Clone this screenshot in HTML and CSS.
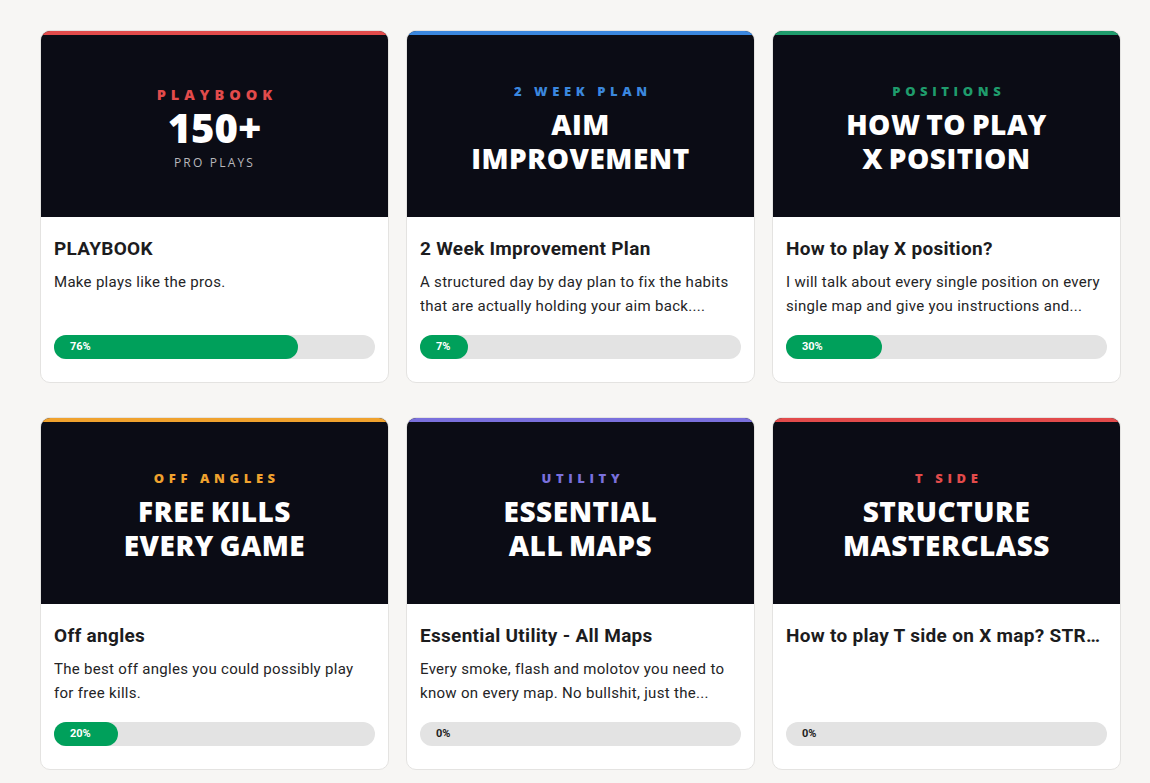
FILE: index.html
```html
<!DOCTYPE html>
<html lang="en">
<head>
  <meta charset="UTF-8" />
  <meta name="viewport" content="width=device-width, initial-scale=1.0"/>
  <title>Courses</title>
  <link rel="stylesheet" href="styles.css">
</head>
<body>

<div class="grid">

  <div class="card red">
    <div class="cover">
      <div class="tag large">Playbook</div>
      <div class="big">150+</div>
      <div class="sub">Pro plays</div>
    </div>
    <div class="body">
      <h3>PLAYBOOK</h3>
      <p>Make plays like the pros.</p>
      <div class="bar"><span class="fill" style="width: 76%">76%</span></div>
    </div>
  </div>

  <div class="card blue">
    <div class="cover">
      <div class="tag">2 Week Plan</div>
      <div class="head">Aim<br>Improvement</div>
    </div>
    <div class="body">
      <h3>2 Week Improvement Plan</h3>
      <p>A structured day by day plan to fix the habits that are actually holding your aim back....</p>
      <div class="bar"><span class="fill" style="width: 7%">7%</span></div>
    </div>
  </div>

  <div class="card green">
    <div class="cover">
      <div class="tag">Positions</div>
      <div class="head">How to play<br>X position</div>
    </div>
    <div class="body">
      <h3>How to play X position?</h3>
      <p>I will talk about every single position on every single map and give you instructions and...</p>
      <div class="bar"><span class="fill" style="width: 30%">30%</span></div>
    </div>
  </div>

  <div class="card orange">
    <div class="cover">
      <div class="tag">Off angles</div>
      <div class="head">Free kills<br>every game</div>
    </div>
    <div class="body">
      <h3>Off angles</h3>
      <p>The best off angles you could possibly play for free kills.</p>
      <div class="bar"><span class="fill" style="width: 20%">20%</span></div>
    </div>
  </div>

  <div class="card purple">
    <div class="cover">
      <div class="tag">Utility</div>
      <div class="head">Essential<br>all maps</div>
    </div>
    <div class="body">
      <h3>Essential Utility - All Maps</h3>
      <p>Every smoke, flash and molotov you need to know on every map. No bullshit, just the...</p>
      <div class="bar"><span class="fill zero">0%</span></div>
    </div>
  </div>

  <div class="card red">
    <div class="cover">
      <div class="tag">T side</div>
      <div class="head">Structure<br>masterclass</div>
    </div>
    <div class="body">
      <h3>How to play T side on X map? STRUCTURE MASTERCLASS</h3>
      <p></p>
      <div class="bar"><span class="fill zero">0%</span></div>
    </div>
  </div>

</div>

</body>
</html>
```

FILE: styles.css
```css
body { margin: 0; background: #f7f6f4; font-family: Roboto, "Liberation Sans", sans-serif; color: #1c1c1e; }
.grid { display: grid; grid-template-columns: repeat(3, 349px); column-gap: 17px; row-gap: 34px; padding: 30px 0 30px 40px; }

.card { background: #fff; border: 1px solid #e4e3e1; border-radius: 10px; overflow: hidden; box-sizing: border-box; }
.card.red { --accent: #e24b4b; }
.card.blue { --accent: #3b87de; }
.card.green { --accent: #1f9c6c; }
.card.orange { --accent: #f0a22e; }
.card.purple { --accent: #7a70dc; }

/* dark cover art at the top of each card */
.cover { background: #0b0c15; border-top: 5px solid var(--accent); height: 187px; padding-top: 4px; box-sizing: border-box; margin: -1px -1px 0; display: flex; flex-direction: column; align-items: center; justify-content: center; text-align: center; font-family: "Open Sans", sans-serif; color: #fff; text-transform: uppercase; }
.cover .tag { color: var(--accent); font-size: 13px; font-weight: 800; letter-spacing: 4.6px; line-height: 18px; margin-right: -4.6px; margin-bottom: 7px; }
.cover .tag.large { font-size: 14.5px; letter-spacing: 5px; margin-right: -5px; margin-bottom: 4px; }
.cover .head { font-size: 28px; font-weight: 800; line-height: 34px; letter-spacing: 0.5px; word-spacing: -2px; }
.cover .big { font-size: 40px; font-weight: 800; line-height: 40px; }
.cover .sub { font-size: 12px; color: #b8b8bc; letter-spacing: 2.2px; margin-top: 6px; }

.body { padding: 20px 13px 23px; }
.body h3 { margin: 0; font-size: 19px; font-weight: 700; line-height: 24px; letter-spacing: 0.3px; white-space: nowrap; overflow: hidden; text-overflow: ellipsis; }
.body p { margin: 9px 0 17px; font-size: 15px; line-height: 24px; letter-spacing: 0.3px; height: 48px; color: #242426; display: -webkit-box; -webkit-line-clamp: 2; -webkit-box-orient: vertical; overflow: hidden; }

.bar { background: #e3e3e3; height: 24px; border-radius: 12px; display: flex; }
.bar .fill { background: #00a05b; min-width: 48px; border-radius: 12px; color: #fff; font-size: 11px; font-weight: 700; line-height: 24px; padding-left: 16px; box-sizing: border-box; }
.bar .fill.zero { background: none; color: #222; }
```
